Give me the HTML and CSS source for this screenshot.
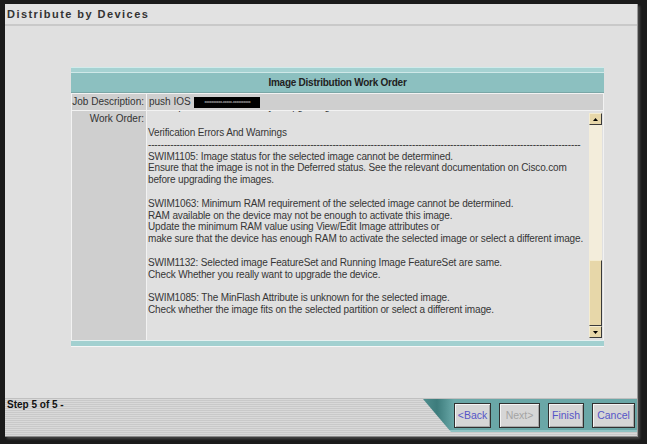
FILE: index.html
```html
<!DOCTYPE html>
<html>
<head>
<meta charset="utf-8">
<link rel="stylesheet" href="styles.css">
</head>
<body>
<div class="window">
  <div class="titlebar">Distribute by Devices</div>
  <div class="content">
    <div class="tbl">
      <div class="tbl-top"></div>
      <div class="tbl-head">Image Distribution Work Order</div>
      <div class="tbl-rows">
        <div class="lbl lbl-job">Job Description:</div>
        <div class="val val-job">push IOS <span class="redact">xxxxxxxxxx-xxxxx-xxxxxxxxxx</span></div>
        <div class="lbl lbl-work">Work Order:</div>
        <div class="val val-work">
          <div class="textarea">
            <div class="text line0">Pre-requisite check summary of upgrading</div>
            <div class="text rest">
Verification Errors And Warnings
----------------------------------------------------------------------------------------------------------------------------------------
SWIM1105: Image status for the selected image cannot be determined.
Ensure that the image is not in the Deferred status. See the relevant documentation on Cisco.com
before upgrading the images.

SWIM1063: Minimum RAM requirement of the selected image cannot be determined.
RAM available on the device may not be enough to activate this image.
Update the minimum RAM value using View/Edit Image attributes or
make sure that the device has enough RAM to activate the selected image or select a different image.

SWIM1132: Selected image FeatureSet and Running Image FeatureSet are same.
Check Whether you really want to upgrade the device.

SWIM1085: The MinFlash Attribute is unknown for the selected image.
Check whether the image fits on the selected partition or select a different image.
</div>
          </div>
          <div class="scrollbar">
            <div class="sb-btn"><svg width="5" height="3" viewBox="0 0 5 3"><path d="M0 3 L2.5 0 L5 3 Z" fill="#000"/></svg></div>
            <div class="sb-track"></div>
            <div class="sb-thumb"></div>
            <div class="sb-btn"><svg width="5" height="3" viewBox="0 0 5 3"><path d="M0 0 L2.5 3 L5 0 Z" fill="#000"/></svg></div>
          </div>
        </div>
      </div>
      <div class="tbl-bottom"></div>
    </div>
  </div>
  <div class="footer">
    <div class="step">Step 5 of 5 -</div>
    <div class="nav">
      <div class="btn btn-back">&lt;Back</div>
      <div class="btn btn-next">Next&gt;</div>
      <div class="btn btn-finish">Finish</div>
      <div class="btn btn-cancel">Cancel</div>
    </div>
  </div>
</div>
</body>
</html>
```

FILE: styles.css
```css
html, body {
  margin: 0;
  padding: 0;
  background: #1b1b1b;
}
body {
  width: 647px;
  height: 444px;
  overflow: hidden;
  font-family: "Liberation Sans", Arial, sans-serif;
  font-size: 10px;
  color: #333;
}
.window {
  margin: 4px 0 0 5px;
  width: 632px;
  height: 432px;
  background: #e0e0e0;
  display: flex;
  flex-direction: column;
  border-right: 1px solid #9a9a9a;
  border-bottom: 1px solid #8a8a8a;
  box-shadow: 2px 2px 2px #444;
}
.titlebar {
  height: 20px;
  line-height: 21px;
  padding-left: 2px;
  font-size: 11px;
  font-weight: bold;
  letter-spacing: 1.45px;
  color: #333;
  background: #e2e2e2;
  border-bottom: 2px solid #c9c9c9;
  flex: none;
}
.content {
  flex: 1;
  padding-top: 41px;
}
.tbl {
  width: 533px;
  margin-left: 66px;
}
.tbl-top {
  height: 4px;
  background: #a6d2d2;
  border-top: 1px solid #d2ebeb;
  border-bottom: 1px solid #cfe8e8;
}
.tbl-head {
  height: 19px;
  line-height: 19px;
  background: #8cc0c0;
  border-bottom: 1px solid #7aa6a6;
  text-align: center;
  font-weight: bold;
  letter-spacing: -0.25px;
  color: #222;
}
.tbl-rows {
  display: grid;
  grid-template-columns: 74px minmax(0, 1fr);
  grid-template-rows: 16px 229px;
  gap: 1px;
  padding: 1px 1px 0 1px;
  background: #f2f2f2;
}
.lbl {
  background: #cfcfcf;
  text-align: right;
  padding-right: 2px;
  color: #333;
  white-space: nowrap;
}
.lbl-job {
  line-height: 16px;
}
.lbl-work {
  padding-top: 1px;
  line-height: 13px;
}
.val {
  background: #e0e0e0;
  min-width: 0;
}
.val-job {
  background: #cfcfcf;
  line-height: 16px;
  padding-left: 2px;
  display: flex;
  align-items: center;
  white-space: pre;
}
.redact {
  display: inline-block;
  width: 66px;
  height: 11px;
  background: #000;
  color: #eee;
  font-size: 3.5px;
  line-height: 11px;
  text-align: center;
  overflow: hidden;
  margin-left: 1px;
}
.val-work {
  display: flex;
  min-height: 0;
}
.textarea {
  flex: 1;
  min-width: 0;
  overflow: hidden;
  padding-left: 1px;
}
.text {
  white-space: pre;
  line-height: 11.8px;
  letter-spacing: -0.15px;
  color: #363636;
}
.line0 {
  margin-top: -10.5px;
}
.rest {
  margin-top: 3px;
}
.scrollbar {
  width: 13px;
  flex: none;
  margin: 2px 1px 2px 0;
  display: flex;
  flex-direction: column;
}
.sb-btn {
  background: #e7d7a9;
  border-top: 1px solid #f4ecd0;
  border-left: 1px solid #f4ecd0;
  border-right: 1px solid #3a3a3a;
  border-bottom: 1px solid #3a3a3a;
  box-sizing: border-box;
  height: 12px;
  display: flex;
  align-items: center;
  justify-content: center;
}
.sb-track {
  flex: 1;
  background: #f3eddb;
}
.sb-thumb {
  height: 66px;
  background: #e7d7a9;
  border-top: 1px solid #f4ecd0;
  border-left: 1px solid #f4ecd0;
  border-right: 1px solid #3a3a3a;
  border-bottom: 1px solid #3a3a3a;
  box-sizing: border-box;
}
.tbl-bottom {
  height: 5px;
  background: #a2d0d0;
  border-top: 1px solid #e6f0f0;
  border-bottom: 1px solid #f6f6f6;
}
.footer {
  height: 38px;
  flex: none;
  display: flex;
  justify-content: space-between;
  background: repeating-linear-gradient(to bottom, #d9d9d9 0px, #d9d9d9 1px, #c9c9c9 1px, #c9c9c9 2px);
  border-top: 1px solid #c0c0c0;
  box-sizing: border-box;
}
.step {
  font-weight: bold;
  color: #111;
  padding: 1px 0 0 2px;
  line-height: 10px;
}
.nav {
  width: 214px;
  height: 33px;
  display: flex;
  gap: 8px;
  padding: 4px 0 0 31px;
  box-sizing: border-box;
  background: linear-gradient(to right, #4f8e8e 0px, #3d7c7c 14px, #5c9b9b 26px, #6aa7a7 31px, #6aa7a7 100%);
  clip-path: polygon(0 0, 100% 0, 100% 100%, 28px 100%);
  border-bottom: 2px solid #8fc2c2;
}
.btn {
  height: 25px;
  box-sizing: border-box;
  background: #d6d6d6;
  border: 1px solid #303030;
  box-shadow: inset 1px 1px 0 #f4f4f4, inset -1px -1px 0 #a8a8a8;
  color: #5555c6;
  text-align: center;
  line-height: 23px;
  font-size: 10.5px;
}
.btn-back { width: 37px; }
.btn-next { width: 41px; color: #a4a4a4; }
.btn-finish { width: 36px; }
.btn-cancel { width: 43px; }
```
